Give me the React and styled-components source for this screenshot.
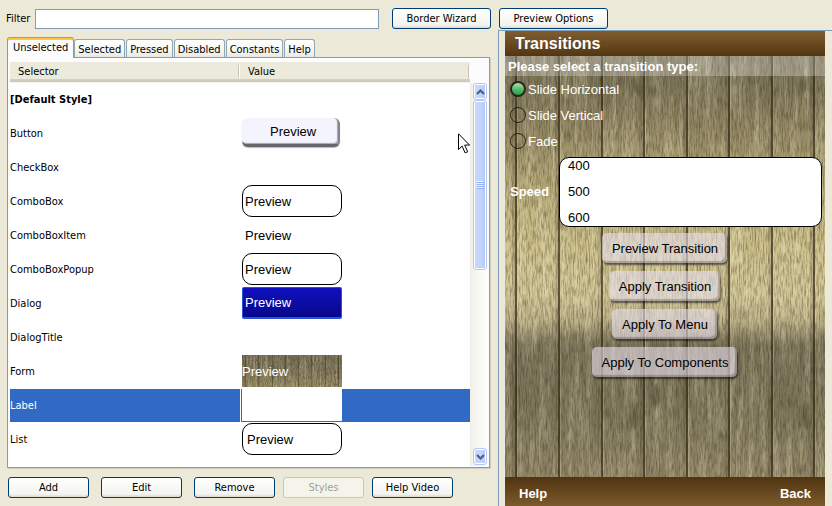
import React, { useState } from "react";
import styled, { createGlobalStyle, css } from "styled-components";

const uiFont = '"DejaVu Sans Condensed", "DejaVu Sans", sans-serif';
const phoneFont = '"Liberation Sans", Arial, sans-serif';

const GlobalStyle = createGlobalStyle`
  *, *::before, *::after { box-sizing: border-box; }
  body { margin: 0; background: #ece9d8; color: #000; font: 11px/14px ${uiFont}; }
  button, input { font: inherit; color: inherit; margin: 0; }
`;

const Page = styled.div`
  display: flex;
  flex-direction: column;
  height: 100vh;
  min-height: 320px;
  overflow: hidden;
  background: #ece9d8;
`;

const Toolbar = styled.header`
  display: grid;
  grid-template-columns: minmax(0, 1fr) 333px;
  gap: 8px;
  padding: 8px 0 1px;
`;

const FilterGroup = styled.div`
  display: flex;
  align-items: center;
  gap: 13px;
`;

const FilterLabel = styled.label`
  display: flex;
  flex: 1;
  align-items: center;
  gap: 5px;
  padding-left: 6px;
`;

const FilterInput = styled.input`
  flex: 1;
  min-width: 0;
  height: 20px;
  padding: 0 4px;
  border: 1px solid #7f9db9;
  background: #fff;
  outline: none;
`;

const XpButton = styled.button`
  flex: none;
  min-width: ${(p) => p.$minWidth || 81}px;
  height: 21px;
  padding: 0 12px;
  border: 1px solid #003c74;
  border-radius: 3px;
  background: linear-gradient(#fff, #f3f3ef 85%, #dcd8cd);
  line-height: 18px;
  white-space: nowrap;
  &:disabled {
    border-color: #c9c7ba;
    background: #f5f4ea;
    color: #a1a192;
  }
`;

const Workspace = styled.main`
  display: grid;
  grid-template-columns: minmax(0, 1fr) 334px;
  gap: 8px;
  flex: 1;
  min-height: 0;
`;

const Editor = styled.section`
  display: flex;
  flex-direction: column;
  min-height: 0;
  padding: 7px 0 8px 7px;
`;

const TabList = styled.div`
  display: flex;
  align-items: flex-end;
  gap: 1px;
  height: 20px;
  flex: none;
`;

const Tab = styled.button`
  height: 18px;
  padding: 1px 3px 0;
  border: 1px solid #91a7b4;
  border-bottom: 0;
  border-radius: 3px 3px 0 0;
  background: linear-gradient(#fff, #f4f4ef 70%, #e9e7df);
  line-height: 15px;
  white-space: nowrap;
  ${(p) =>
    p.$active &&
    css`
      z-index: 1;
      height: 20px;
      margin: 1px -1px -1px 0;
      padding: 0 5px 3px;
      border-color: #919b9c;
      border-top: 2px solid #ffc73c;
      background: #fcfcfe;
      box-shadow: 0 -1px #e68b2c;
    `}
`;

const TabPanel = styled.div`
  display: flex;
  flex-direction: column;
  flex: 1;
  min-height: 0;
  padding: 4px 1px 1px 2px;
  border: 1px solid #919b9c;
  background: #fcfcfe;
  box-shadow: 1px 1px #d0cebf;
`;

const HeaderRow = styled.div`
  display: grid;
  grid-template-columns: 1fr 1fr;
  flex: none;
  margin-right: 18px;
  border-bottom: 1px solid #f4f2e8;
`;

const HeaderCell = styled.div`
  display: flex;
  justify-content: space-between;
  height: 20px;
  padding: 3px 0 1px 8px;
  background: linear-gradient(#ebeadb 17px, #d6d2c2 17px, #cbc7b8 20px);
  &::after {
    content: "";
    width: 2px;
    height: 13px;
    border-left: 1px solid #c7c5b2;
    background: #fff;
  }
`;

const ListArea = styled.div`
  display: grid;
  grid-template-columns: minmax(0, 1fr) 18px;
  flex: 1;
  min-height: 0;
  background: #fff;
`;

const TableViewport = styled.div`
  overflow: hidden;
`;

const Table = styled.table`
  width: 100%;
  border-collapse: separate;
  border-spacing: 0;
  table-layout: fixed;
`;

const Row = styled.tr`
  height: 34px;
  color: ${(p) => (p.$selected ? "#fff" : "#000")};
  background: #fff;
  & > * {
    background: ${(p) => (p.$selected ? "#316ac5" : "#fff")} padding-box;
  }
`;

const NameCell = styled.th`
  padding: 1px 0 0;
  border-bottom: 1px solid transparent;
  font-weight: ${(p) => (p.$bold ? "bold" : "normal")};
  text-align: left;
  vertical-align: middle;
`;

const ValueCell = styled.td`
  padding: 0 0 1px 1px;
  border-left: 1px solid transparent;
  border-bottom: 1px solid transparent;
  vertical-align: top;
`;

const swatchStyles = {
  button: css`
    width: 98px;
    height: 29px;
    margin-top: 1px;
    padding-left: 28px;
    border: solid;
    border-width: 0 2px 3px 0;
    border-color: #85858d #85858d #66666d;
    border-radius: 6px;
    background: #f4f4ff;
    box-shadow: inset -1px -1px 1px #a5a5ae, 0 1px 1px #bbb;
  `,
  rounded: css`
    padding-left: 2px;
    border: 1px solid #000;
    border-radius: 10px;
  `,
  list: css`
    padding-left: 4px;
    border: 1px solid #000;
    border-radius: 10px;
  `,
  plain: css`
    padding-left: 3px;
  `,
  dialog: css`
    padding-left: 2px;
    border: 1px solid #2a50e0;
    border-bottom-width: 2px;
    border-radius: 2px;
    background: linear-gradient(#1010c0, #08088a);
    color: #fff;
  `,
  wood: css`
    color: #fff;
    overflow: hidden;
  `,
  blank: css`
    background: #fff;
  `,
};

const Swatch = styled.div`
  display: flex;
  align-items: center;
  isolation: isolate;
  position: relative;
  width: 100px;
  height: 32px;
  padding-top: 1px;
  font: 13px/16px ${phoneFont};
  ${(p) => swatchStyles[p.$kind]}
`;

const ScrollTrack = styled.div`
  display: flex;
  flex-direction: column;
  padding: 0 1px 1px 2px;
  border-left: 1px solid #eeede5;
  background: linear-gradient(90deg, #f3f1ec, #fefefb);
`;

const scrollSurface = css`
  display: flex;
  align-items: center;
  justify-content: center;
  flex: none;
  padding: 0;
  border: 1px solid #fff;
  border-radius: 3px;
  outline: 1px solid #b4c8f6;
  outline-offset: -1px;
  background: linear-gradient(90deg, #c9d8fc, #c2d3fd 60%, #b0c6f7);
  box-shadow: inset 0 0 0 1px #fff;
`;

const ScrollButton = styled.button`
  ${scrollSurface}
  height: 17px;
  margin-top: ${(p) => (p.$end ? "auto" : "0")};
`;

const ScrollThumb = styled.div`
  ${scrollSurface}
  height: 44.5%;
`;

const ActionGroup = styled.div`
  display: flex;
  gap: 12px;
`;

const ActionBar = styled.footer`
  display: flex;
  flex: none;
  gap: 8px;
  padding: 9px 0 0 1px;
`;

const PreviewPane = styled.aside`
  display: flex;
  min-height: 0;
  padding: 0 7px 0 6px;
  border-top: 1px solid #7f9db9;
  border-left: 1px solid #7f9db9;
`;

const Phone = styled.div`
  display: flex;
  flex-direction: column;
  position: relative;
  isolation: isolate;
  flex: 1;
  min-height: 0;
  overflow: hidden;
  color: #fff;
  font: 13px/16px ${phoneFont};
`;

const WoodArt = styled.svg`
  position: absolute;
  inset: 0;
  z-index: -1;
  width: 100%;
  height: 100%;
`;

const PhoneTitle = styled.h1`
  margin: 0;
  height: 25px;
  padding: 0 10px;
  background: linear-gradient(#805d30, #523611);
  font-size: 16px;
  line-height: 25px;
`;

const Fieldset = styled.fieldset`
  display: flex;
  flex-direction: column;
  min-width: 0;
  margin: 0;
  padding: 0;
  border: 0;
`;

const Legend = styled.legend`
  width: 100%;
  height: 20px;
  padding: 0 3px;
  background: rgba(255, 255, 255, 0.26);
  font-weight: bold;
  line-height: 21px;
`;

const RadioLabel = styled.label`
  display: flex;
  align-items: center;
  gap: 2px;
  height: 26px;
  padding-left: 5px;
`;

const RadioText = styled.span`
  padding-top: 2px;
`;

const Radio = styled.input`
  appearance: none;
  width: 16px;
  height: 16px;
  border: 1px solid #2a2416;
  border-radius: 50%;
  &:checked {
    border-width: 2px;
    background: linear-gradient(#a9e0b2, #52b869 55%, #2aa048);
  }
`;

const SpeedRow = styled.div`
  display: grid;
  grid-template-columns: 46px 1fr;
  align-items: center;
  gap: 3px;
  padding: 3px 3px 6px 5px;
`;

const SpeedLabel = styled.span`
  font-weight: bold;
`;

const SpeedList = styled.ul`
  display: flex;
  flex-direction: column;
  justify-content: center;
  height: 70px;
  margin: 0;
  padding: 0 8px;
  border: 1px solid #000;
  border-radius: 10px;
  overflow: hidden;
  background: #fff;
  color: #000;
  list-style: none;
`;

const SpeedOption = styled.li`
  flex: none;
  height: 26px;
  line-height: 25px;
`;

const PhoneButtons = styled.div`
  display: flex;
  flex-direction: column;
  align-items: center;
  gap: 8px;
  padding-right: 1px;
`;

const PhoneButton = styled.button`
  height: 30px;
  padding: 2px 9px 0 10px;
  border: 0;
  border-radius: 5px;
  background: rgba(232, 224, 236, 0.6);
  box-shadow: inset -2px -2px 1px rgba(60, 55, 50, 0.3), 1px 2px 2px rgba(0, 0, 0, 0.55);
  color: #000;
  line-height: 18px;
`;

const SoftKeys = styled.nav`
  display: flex;
  justify-content: space-between;
  height: 29px;
  margin-top: auto;
  padding: 0 14px;
  background: linear-gradient(#503511, #7b592c);
`;

const SoftKey = styled.button`
  padding: 4px 0 0;
  border: 0;
  background: none;
  font-weight: bold;
`;

const Pointer = styled.svg`
  position: fixed;
  left: 458px;
  top: 133px;
  width: 12px;
  height: 21px;
  pointer-events: none;
`;

const planks = [10, 53, 96, 138, 181, 223, 266, 308];
const knots = [
  [129, 54, 3, 8],
  [299, 54, 3, 8],
  [151, 364, 5, 11],
  [129, 378, 3, 8],
  [129, 390, 4, 8],
  [299, 378, 3, 8],
  [299, 390, 4, 8],
  [56, 28, 3, 5],
  [226, 28, 3, 5],
];

function Wood({ id }) {
  return (
    <WoodArt viewBox="0 0 320 475" preserveAspectRatio="xMinYMin slice" aria-hidden="true">
      <defs>
        <linearGradient id={`${id}-light`} x1="0" y1="0" x2="0" y2="1">
          <stop offset="0" stopColor="#787056" />
          <stop offset="0.12" stopColor="#7d7559" />
          <stop offset="0.22" stopColor="#978c67" />
          <stop offset="0.33" stopColor="#b9ad7c" />
          <stop offset="0.45" stopColor="#cdc18c" />
          <stop offset="0.56" stopColor="#d2c798" />
          <stop offset="0.61" stopColor="#bbb088" />
          <stop offset="0.66" stopColor="#7a7359" />
          <stop offset="0.78" stopColor="#7d765b" />
          <stop offset="1" stopColor="#988d6c" />
        </linearGradient>
        <filter id={`${id}-grain`} x="0" y="0" width="1" height="1" colorInterpolationFilters="sRGB">
          <feTurbulence type="fractalNoise" baseFrequency="0.7 0.09" numOctaves="3" seed="8" />
          <feColorMatrix values="0 0 0 0 0.22  0 0 0 0 0.18  0 0 0 0 0.08  1.9 0 0 0 -0.75" />
        </filter>
        <filter id={`${id}-shine`} x="0" y="0" width="1" height="1" colorInterpolationFilters="sRGB">
          <feTurbulence type="fractalNoise" baseFrequency="0.16 0.012" numOctaves="5" seed="21" />
          <feColorMatrix values="0 0 0 0 1  0 0 0 0 0.96  0 0 0 0 0.84  2 0 0 0 -0.85" />
        </filter>
        <filter id={`${id}-soft`} x="-1" y="-1" width="3" height="3">
          <feGaussianBlur stdDeviation="2" />
        </filter>
      </defs>
      <rect width="320" height="475" fill={`url(#${id}-light)`} />
      <rect width="320" height="475" filter={`url(#${id}-shine)`} opacity="0.38" />
      {knots.map(([x, y, rx, ry]) => (
        <ellipse key={`${x}-${y}`} cx={x} cy={y} rx={rx} ry={ry} fill="#3a321c" opacity="0.45" filter={`url(#${id}-soft)`} />
      ))}
      <rect width="320" height="475" filter={`url(#${id}-grain)`} opacity="0.5" />
      {planks.map((x) => (
        <g key={x}>
          <rect x={x - 3} width="3" height="475" fill="#2c2512" opacity="0.14" />
          <rect x={x} width="2" height="475" fill="#2f2812" opacity="0.7" />
          <rect x={x + 2} width="1" height="475" fill="#fff8d0" opacity="0.15" />
        </g>
      ))}
    </WoodArt>
  );
}

function Chevron({ down }) {
  return (
    <svg width="9" height="6" viewBox="0 0 9 6" aria-hidden="true">
      <path
        d={down ? "M1 1 4.5 4.5 8 1" : "M1 5 4.5 1.5 8 5"}
        fill="none"
        stroke="#4d6185"
        strokeWidth="2.2"
      />
    </svg>
  );
}

const tabs = ["Unselected", "Selected", "Pressed", "Disabled", "Constants", "Help"];

const styleRows = [
  { name: "[Default Style]", bold: true },
  { name: "Button", kind: "button" },
  { name: "CheckBox" },
  { name: "ComboBox", kind: "rounded" },
  { name: "ComboBoxItem", kind: "plain" },
  { name: "ComboBoxPopup", kind: "rounded" },
  { name: "Dialog", kind: "dialog" },
  { name: "DialogTitle" },
  { name: "Form", kind: "wood" },
  { name: "Label", kind: "blank", selected: true },
  { name: "List", kind: "list" },
];

const transitions = ["Slide Horizontal", "Slide Vertical", "Fade"];
const speeds = ["400", "500", "600"];
const commands = ["Preview Transition", "Apply Transition", "Apply To Menu", "Apply To Components"];

export default function App() {
  const [filter, setFilter] = useState("");
  const [transition, setTransition] = useState(transitions[0]);

  return (
    <Page>
      <GlobalStyle />
      <Toolbar>
        <FilterGroup>
          <FilterLabel>
            Filter
            <FilterInput type="text" value={filter} onChange={(e) => setFilter(e.target.value)} />
          </FilterLabel>
          <XpButton $minWidth={99}>Border Wizard</XpButton>
        </FilterGroup>
        <div>
          <XpButton $minWidth={109}>Preview Options</XpButton>
        </div>
      </Toolbar>
      <Workspace>
        <Editor>
          <TabList role="tablist">
            {tabs.map((name, i) => (
              <Tab key={name} role="tab" aria-selected={i === 0} $active={i === 0}>
                {name}
              </Tab>
            ))}
          </TabList>
          <TabPanel role="tabpanel">
            <HeaderRow>
              <HeaderCell>Selector</HeaderCell>
              <HeaderCell>Value</HeaderCell>
            </HeaderRow>
            <ListArea>
              <TableViewport>
                <Table aria-label="Styles">
                  <tbody>
                    {styleRows.map(({ name, bold, kind, selected }) => (
                      <Row key={name} $selected={selected}>
                        <NameCell scope="row" $bold={bold}>
                          {name}
                        </NameCell>
                        <ValueCell>
                          {kind && (
                            <Swatch $kind={kind}>
                              {kind === "wood" && <Wood id="swatch" />}
                              {kind !== "blank" && "Preview"}
                            </Swatch>
                          )}
                        </ValueCell>
                      </Row>
                    ))}
                  </tbody>
                </Table>
              </TableViewport>
              <ScrollTrack>
                <ScrollButton aria-label="Scroll up">
                  <Chevron />
                </ScrollButton>
                <ScrollThumb>
                  <svg width="8" height="8" viewBox="0 0 8 8" aria-hidden="true">
                    <path d="M0 .5h7M0 2.5h7M0 4.5h7M0 6.5h7" stroke="#eef4fe" />
                    <path d="M1 1.5h7M1 3.5h7M1 5.5h7M1 7.5h7" stroke="#8cb0f8" />
                  </svg>
                </ScrollThumb>
                <ScrollButton $end aria-label="Scroll down">
                  <Chevron down />
                </ScrollButton>
              </ScrollTrack>
            </ListArea>
          </TabPanel>
          <ActionBar>
            <ActionGroup>
              <XpButton>Add</XpButton>
              <XpButton>Edit</XpButton>
              <XpButton>Remove</XpButton>
            </ActionGroup>
            <XpButton disabled>Styles</XpButton>
            <XpButton>Help Video</XpButton>
          </ActionBar>
        </Editor>
        <PreviewPane>
          <Phone>
            <Wood id="phone" />
            <PhoneTitle>Transitions</PhoneTitle>
            <Fieldset>
              <Legend>Please select a transition type:</Legend>
              {transitions.map((name) => (
                <RadioLabel key={name}>
                  <Radio
                    type="radio"
                    name="transition"
                    checked={transition === name}
                    onChange={() => setTransition(name)}
                  />
                  <RadioText>{name}</RadioText>
                </RadioLabel>
              ))}
            </Fieldset>
            <SpeedRow>
              <SpeedLabel id="speed-label">Speed</SpeedLabel>
              <SpeedList role="listbox" aria-labelledby="speed-label">
                {speeds.map((s) => (
                  <SpeedOption key={s} role="option" aria-selected={s === "500"}>
                    {s}
                  </SpeedOption>
                ))}
              </SpeedList>
            </SpeedRow>
            <PhoneButtons>
              {commands.map((name) => (
                <PhoneButton key={name}>{name}</PhoneButton>
              ))}
            </PhoneButtons>
            <SoftKeys>
              <SoftKey>Help</SoftKey>
              <SoftKey>Back</SoftKey>
            </SoftKeys>
          </Phone>
        </PreviewPane>
      </Workspace>
      <Pointer viewBox="0 0 12 21" aria-hidden="true">
        <path
          d="M.5 .8v15.7l3.6-3.4 3 6.8 2.6-1.1-3-6.7h4.9z"
          fill="#fff"
          stroke="#000"
        />
      </Pointer>
    </Page>
  );
}
